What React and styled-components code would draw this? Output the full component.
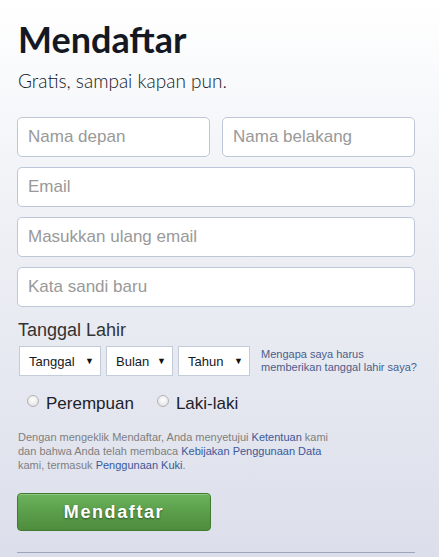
import React from 'react';
import styled, { createGlobalStyle } from 'styled-components';

const GlobalStyle = createGlobalStyle`
  html, body {
    margin: 0;
    padding: 0;
  }
  body {
    background: linear-gradient(to bottom, #ffffff 0%, #eef0f5 40%, #dcdfeb 100%);
    min-height: 557px;
    font-family: "Liberation Sans", Arial, sans-serif;
  }
`;

const Page = styled.div`
  width: 415px;
  height: 557px;
  padding: 17px 0 0 17px;
  box-sizing: border-box;
  display: flex;
  flex-direction: column;
`;

const Title = styled.h1`
  margin: 0 0 0 1px;
  font-family: Lato, "Open Sans", sans-serif;
  font-weight: 700;
  font-size: 36px;
  line-height: 44px;
  color: #141823;
`;

const Subtitle = styled.p`
  margin: 8px 0 0 1px;
  font-family: Lato, "Open Sans", sans-serif;
  font-weight: 300;
  font-size: 19px;
  line-height: 24px;
  color: #141823;
`;

const Fields = styled.div`
  margin-top: 24px;
  display: flex;
  flex-direction: column;
  gap: 10px;
`;

const Row = styled.div`
  display: flex;
  gap: 12px;

  & > input {
    flex: 1;
  }
`;

const Input = styled.input`
  min-width: 0;
  height: 40px;
  box-sizing: border-box;
  border: 1px solid #bdc7d8;
  border-radius: 5px;
  background: #fff;
  padding: 0 10px;
  font-family: "Liberation Sans", Arial, sans-serif;
  font-size: 17px;
  color: #141823;
  outline: none;

  &::placeholder {
    color: #999999;
  }
`;

const Label = styled.div`
  margin: 12px 0 0 1px;
  font-size: 18px;
  line-height: 22px;
  color: #333;
`;

const BirthRow = styled.div`
  margin-top: 5px;
  display: flex;
  align-items: center;
  padding-left: 2px;
`;

const Selects = styled.div`
  display: flex;
  gap: 5px;
`;

const SelectBox = styled.div`
  width: ${({ $w }) => $w}px;
  height: 30px;
  box-sizing: border-box;
  background: #fff;
  border: 1px solid #c4cbda;
  display: flex;
  align-items: center;
  justify-content: space-between;
  padding: 0 6px 0 9px;
  font-size: 13px;
  color: #141823;
`;

const Arrow = styled.span`
  font-size: 9px;
  color: #111;
`;

const Help = styled.div`
  margin-left: 11px;
  font-size: 11px;
  line-height: 13px;
  white-space: nowrap;
  color: #4b5d8c;
`;

const Gender = styled.div`
  margin-top: 17px;
  padding-left: 10px;
  display: flex;
  gap: 23px;
`;

const RadioLabel = styled.label`
  display: flex;
  align-items: flex-start;
  gap: 7px;
  font-size: 17px;
  line-height: 22px;
  color: #1d2129;
`;

const Radio = styled.span`
  width: 12px;
  height: 12px;
  margin-top: 2px;
  box-sizing: border-box;
  border-radius: 50%;
  border: 1px solid #b3b3b3;
  background: radial-gradient(circle at 50% 40%, #ffffff 0%, #f0f0f0 45%, #d4d4d4 100%);
`;

const Terms = styled.p`
  margin: 15px 0 0 1px;
  font-size: 11px;
  line-height: 14px;
  white-space: nowrap;
  color: #7f7f7f;
`;

const Link = styled.span`
  color: #3b5998;
`;

const Button = styled.button`
  margin-top: 21px;
  width: 194px;
  height: 38px;
  box-sizing: border-box;
  border: 1px solid #3f7a2e;
  border-radius: 4px;
  background: linear-gradient(to bottom, #6cb35d 0%, #5a9e4a 50%, #4e8d3e 100%);
  box-shadow: inset 0 1px 0 rgba(255, 255, 255, 0.25);
  color: #fff;
  font-family: "Liberation Sans", Arial, sans-serif;
  font-weight: 700;
  font-size: 18px;
  letter-spacing: 1.6px;
  text-shadow: 0 1px 2px rgba(0, 0, 0, 0.45);
  padding: 0;
`;

const Divider = styled.hr`
  margin: 21px 0 0 0;
  width: 398px;
  border: none;
  border-top: 1px solid #9da6ba;
`;

const dateSelects = [
  { label: 'Tanggal', w: 82 },
  { label: 'Bulan', w: 67 },
  { label: 'Tahun', w: 72 },
];

export default function App() {
  return (
    <>
      <GlobalStyle />
      <Page>
        <Title>Mendaftar</Title>
        <Subtitle>Gratis, sampai kapan pun.</Subtitle>
        <Fields>
          <Row>
            <Input placeholder="Nama depan" />
            <Input placeholder="Nama belakang" />
          </Row>
          <Input placeholder="Email" />
          <Input placeholder="Masukkan ulang email" />
          <Input placeholder="Kata sandi baru" type="password" />
        </Fields>
        <Label>Tanggal Lahir</Label>
        <BirthRow>
          <Selects>
            {dateSelects.map((s) => (
              <SelectBox key={s.label} $w={s.w}>
                <span>{s.label}</span>
                <Arrow>▼</Arrow>
              </SelectBox>
            ))}
          </Selects>
          <Help>
            Mengapa saya harus
            <br />
            memberikan tanggal lahir saya?
          </Help>
        </BirthRow>
        <Gender>
          <RadioLabel>
            <Radio />
            Perempuan
          </RadioLabel>
          <RadioLabel>
            <Radio />
            Laki-laki
          </RadioLabel>
        </Gender>
        <Terms>
          Dengan mengeklik Mendaftar, Anda menyetujui <Link>Ketentuan</Link> kami
          <br />
          dan bahwa Anda telah membaca <Link>Kebijakan Penggunaan Data</Link>
          <br />
          kami, termasuk <Link>Penggunaan Kuki</Link>.
        </Terms>
        <Button>Mendaftar</Button>
        <Divider />
      </Page>
    </>
  );
}
